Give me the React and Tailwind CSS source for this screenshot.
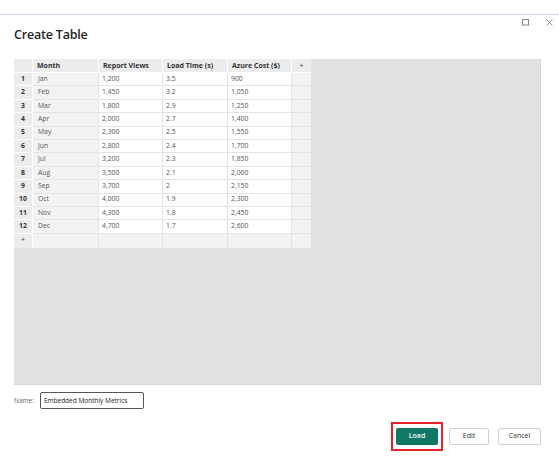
import React from "react";

const rows = [
  ["Jan", "1,200", "3.5", "900"],
  ["Feb", "1,450", "3.2", "1,050"],
  ["Mar", "1,800", "2.9", "1,250"],
  ["Apr", "2,000", "2.7", "1,400"],
  ["May", "2,300", "2.5", "1,550"],
  ["Jun", "2,800", "2.4", "1,700"],
  ["Jul", "3,200", "2.3", "1,850"],
  ["Aug", "3,500", "2.1", "2,000"],
  ["Sep", "3,700", "2", "2,150"],
  ["Oct", "4,000", "1.9", "2,300"],
  ["Nov", "4,300", "1.8", "2,450"],
  ["Dec", "4,700", "1.7", "2,600"],
];

const headers = ["Month", "Report Views", "Load Time (s)", "Azure Cost ($)"];

const App = () => {
  return (
    <div className="w-[559px] h-[469px] bg-white text-[#333] font-['Open_Sans',sans-serif] overflow-hidden">
      {/* window top edge */}
      <div className="h-[15px] border-b border-[#c9d2e2]" />

      {/* title + window controls */}
      <div className="h-[44px] flex items-start justify-between pl-[14px] pr-[6px]">
        <h1 className="mt-[11px] text-[12.5px] font-semibold text-[#242424] tracking-[-0.2px]">
          Create Table
        </h1>
        <div className="mt-[4px] flex items-center gap-[17px] text-[#888]">
          <svg width="7" height="7" viewBox="0 0 7 7">
            <rect x="0.5" y="0.5" width="6" height="5.5" fill="none" stroke="currentColor" strokeWidth="1" />
          </svg>
          <svg width="7" height="7" viewBox="0 0 7 7">
            <path d="M0.5 0.5 L6.5 6.5 M6.5 0.5 L0.5 6.5" stroke="currentColor" strokeWidth="0.9" />
          </svg>
        </div>
      </div>

      {/* grid area */}
      <div className="ml-[14px] mr-[18px] h-[326px] bg-[#e1e1e1] border-r border-b border-[#d6d6d6]">
        <div className="w-[297px] text-[6.8px] leading-none">
          <div className="flex h-[14px] font-bold text-[7px]">
            <div className="w-[19px] bg-[#ececec] border-r border-b border-white" />
            {headers.map((h, i) => (
              <div
                key={h}
                className={
                  "bg-[#ececec] border-r border-b border-white flex items-center pl-[4px] whitespace-nowrap " +
                  (i === 0 ? "w-[66px]" : i === 2 ? "w-[65px]" : "w-[64px]")
                }
              >
                {h}
              </div>
            ))}
            <div className="w-[19px] bg-[#ececec] border-b border-white flex items-center justify-center font-normal">
              +
            </div>
          </div>
          {rows.map((r, idx) => (
            <div key={idx} className="flex h-[13.4px]">
              <div className="w-[19px] bg-[#ececec] border-r border-b border-white flex items-center justify-center font-bold">
                {idx + 1}
              </div>
              <div className="w-[66px] bg-[#f3f3f3] border-r border-b border-[#e4e4e4] flex items-center pl-[5px] text-[#555]">
                {r[0]}
              </div>
              <div className="w-[64px] bg-white border-r border-b border-[#e4e4e4] flex items-center pl-[3px] text-[#555]">
                {r[1]}
              </div>
              <div className="w-[65px] bg-white border-r border-b border-[#e4e4e4] flex items-center pl-[3px] text-[#555]">
                {r[2]}
              </div>
              <div className="w-[64px] bg-white border-r border-b border-[#e4e4e4] flex items-center pl-[3px] text-[#555]">
                {r[3]}
              </div>
              <div className="w-[19px] bg-[#f3f3f3] border-b border-[#e4e4e4]" />
            </div>
          ))}
          <div className="flex h-[14px]">
            <div className="w-[19px] bg-[#ececec] border-r border-white flex items-center justify-center">
              +
            </div>
            <div className="w-[66px] bg-[#f3f3f3] border-r border-[#e4e4e4]" />
            <div className="w-[64px] bg-[#f3f3f3] border-r border-[#e4e4e4]" />
            <div className="w-[65px] bg-[#f3f3f3] border-r border-[#e4e4e4]" />
            <div className="w-[64px] bg-[#f3f3f3] border-r border-[#e4e4e4]" />
            <div className="w-[19px] bg-[#f3f3f3]" />
          </div>
        </div>
      </div>

      {/* name field */}
      <div className="mt-[7px] pl-[14px] flex items-center gap-[6px]">
        <span className="text-[6.5px] text-[#666]">Name:</span>
        <div className="w-[104px] h-[17px] border border-[#555] rounded-[2px] flex items-center px-[3px] text-[6.5px] text-[#222] whitespace-nowrap overflow-hidden">
          Embedded Monthly Metrics
        </div>
      </div>

      {/* actions */}
      <div className="mt-[13px] pr-[18px] flex justify-end items-center">
        <div className="border-2 border-[#e8202a] px-[3px] py-[4px]">
          <button className="w-[42px] h-[17px] bg-[#117865] text-white text-[7px] font-semibold rounded-[2px] flex items-center justify-center">
            Load
          </button>
        </div>
        <button className="ml-[6px] w-[40px] h-[17px] bg-white border border-[#cfcfcf] rounded-[2px] text-[7px] text-[#333] flex items-center justify-center">
          Edit
        </button>
        <button className="ml-[9px] w-[43px] h-[17px] bg-white border border-[#cfcfcf] rounded-[2px] text-[7px] text-[#333] flex items-center justify-center">
          Cancel
        </button>
      </div>
    </div>
  );
};

export default App;
